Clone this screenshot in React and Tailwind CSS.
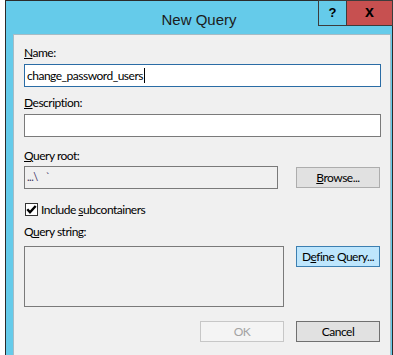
import React from 'react'

// Windows 8 style "New Query" dialog

const FONT = { fontFamily: 'Lato, "Liberation Sans", Arial, sans-serif' }
const TITLE_FONT = { fontFamily: '"Liberation Sans", Arial, sans-serif' }

function Label({ children, className = '' }) {
  return <div className={`h-[15px] text-[12px] leading-[15px] text-black ${className}`}>{children}</div>
}

function Button({ children, variant = 'normal', className = '' }) {
  const styles = {
    normal:   'bg-[#e1e1e1] border-[#adadad] text-black',
    strong:   'bg-[#e1e1e1] border-[#707070] text-black',
    focus:    'bg-[#bee6fd] border-[#3c7fb1] text-black',
    disabled: 'bg-[#f4f4f4] border-[#c7c7c7] text-[#a3a3a3]',
  }
  return (
    <div className={`flex h-[21px] w-[84px] shrink-0 items-center justify-center border text-[12px] leading-[15px] ${styles[variant]} ${className}`}>
      {children}
    </div>
  )
}

export default function App() {
  return (
    <div className="h-[355px] w-[393px] overflow-hidden bg-white pl-[5px]" style={FONT}>
      <div className="relative h-[370px] w-[388px] border-l border-r border-t border-[#2b2b2b] bg-[#65cbea]">
        {/* title bar */}
        <div className="flex h-[33px] items-center justify-center pt-[5px] text-[15px] text-[#1c1c1c]" style={TITLE_FONT}>
          New Query
        </div>
        <div className="absolute right-[-1px] top-[-1px] flex h-[26px]" style={TITLE_FONT}>
          <div className="flex w-[29px] items-center justify-center border border-[#3c3c3c] bg-[#65cbea] text-[13px] font-bold text-black">?</div>
          <div className="-ml-px flex w-[47px] items-center justify-center border border-[#3c3c3c] bg-[#c75050] pb-[2px] text-[16px] font-bold text-black">x</div>
        </div>

        {/* client area */}
        <div className="ml-[7px] h-[340px] w-[378px] border-l border-r border-t border-[#a6bcc6] bg-[#f0f0f0] pl-[10px] pr-[9px] pt-[10px] tracking-[-0.5px]">
          <Label><u>N</u>ame:</Label>
          <div className="mt-[4px] flex h-[23px] items-center border border-[#2a6ca5] bg-white pl-[2px] text-[12px] text-black">
            change_password_users
            <span className="ml-px inline-block h-[15px] w-px bg-black" />
          </div>

          <Label className="mt-[8px]"><u>D</u>escription:</Label>
          <div className="mt-[4px] h-[23px] border border-[#7a7a7a] bg-white" />

          <Label className="mt-[11px]"><u>Q</u>uery root:</Label>
          <div className="mt-[3px] flex items-center justify-between">
            <div className="flex h-[23px] w-[254px] items-center border border-[#7a7a7a] bg-[#f0f0f0] pl-[2px] text-[11px] text-[#3b2f5c]">
              ...\ <span className="ml-[8px]">`</span>
            </div>
            <Button className="mr-px"><span><u>B</u>rowse...</span></Button>
          </div>

          <div className="mt-[14px] flex h-[13px] items-center gap-[3px]">
            <svg width="13" height="13" viewBox="0 0 13 13" className="ml-px shrink-0">
              <rect x="0.5" y="0.5" width="12" height="12" fill="#fff" stroke="#333" />
              <path d="M2.3 6.3 L5 9.3 L10.7 3" fill="none" stroke="#000" strokeWidth="2.4" />
            </svg>
            <span className="text-[12px] leading-[15px] text-black">Include <u>s</u>ubcontainers</span>
          </div>

          <Label className="mt-[8px]">Q<u>u</u>ery string:</Label>
          <div className="mt-[7px] flex items-start justify-between">
            <div className="h-[61px] w-[260px] border border-[#7a7a7a] bg-[#f0f0f0]" />
            <Button variant="focus" className="mr-px"><span>D<u>e</u>fine Query...</span></Button>
          </div>

          <div className="mr-px mt-[14px] flex justify-end gap-[12px]">
            <Button variant="disabled">OK</Button>
            <Button variant="strong">Cancel</Button>
          </div>
        </div>
      </div>
    </div>
  )
}
